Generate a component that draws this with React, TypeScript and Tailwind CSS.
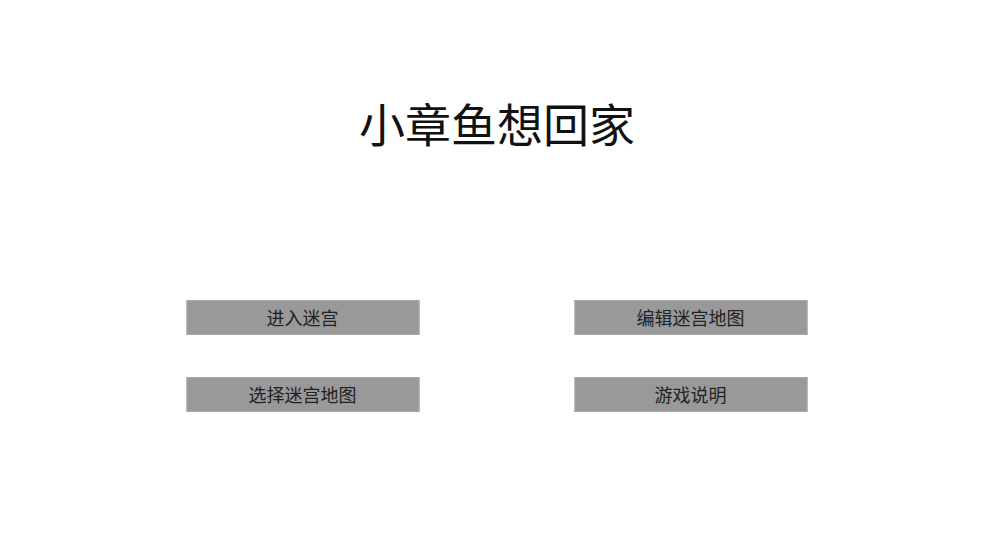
const font = { fontFamily: '"Noto Sans CJK SC", "Noto Sans", sans-serif' }

function MenuButton({ label }: { label: string }): JSX.Element {
  return (
    <button className="w-[233px] h-[35px] bg-[#999999] border border-[#a8a8a8] text-[18px] leading-none text-[#222222] flex items-center justify-center pb-[2px]">
      {label}
    </button>
  )
}

export default function App(): JSX.Element {
  return (
    <div className="w-full h-[558px] bg-white flex flex-col items-center" style={font}>
      <h1 className="mt-[99px] text-[46px] leading-none font-normal text-[#111111]">小章鱼想回家</h1>
      <div className="mt-[155px] grid grid-cols-2 gap-x-[155px] gap-y-[42px] -translate-x-[0.5px]">
        <MenuButton label="进入迷宫" />
        <MenuButton label="编辑迷宫地图" />
        <MenuButton label="选择迷宫地图" />
        <MenuButton label="游戏说明" />
      </div>
    </div>
  )
}
